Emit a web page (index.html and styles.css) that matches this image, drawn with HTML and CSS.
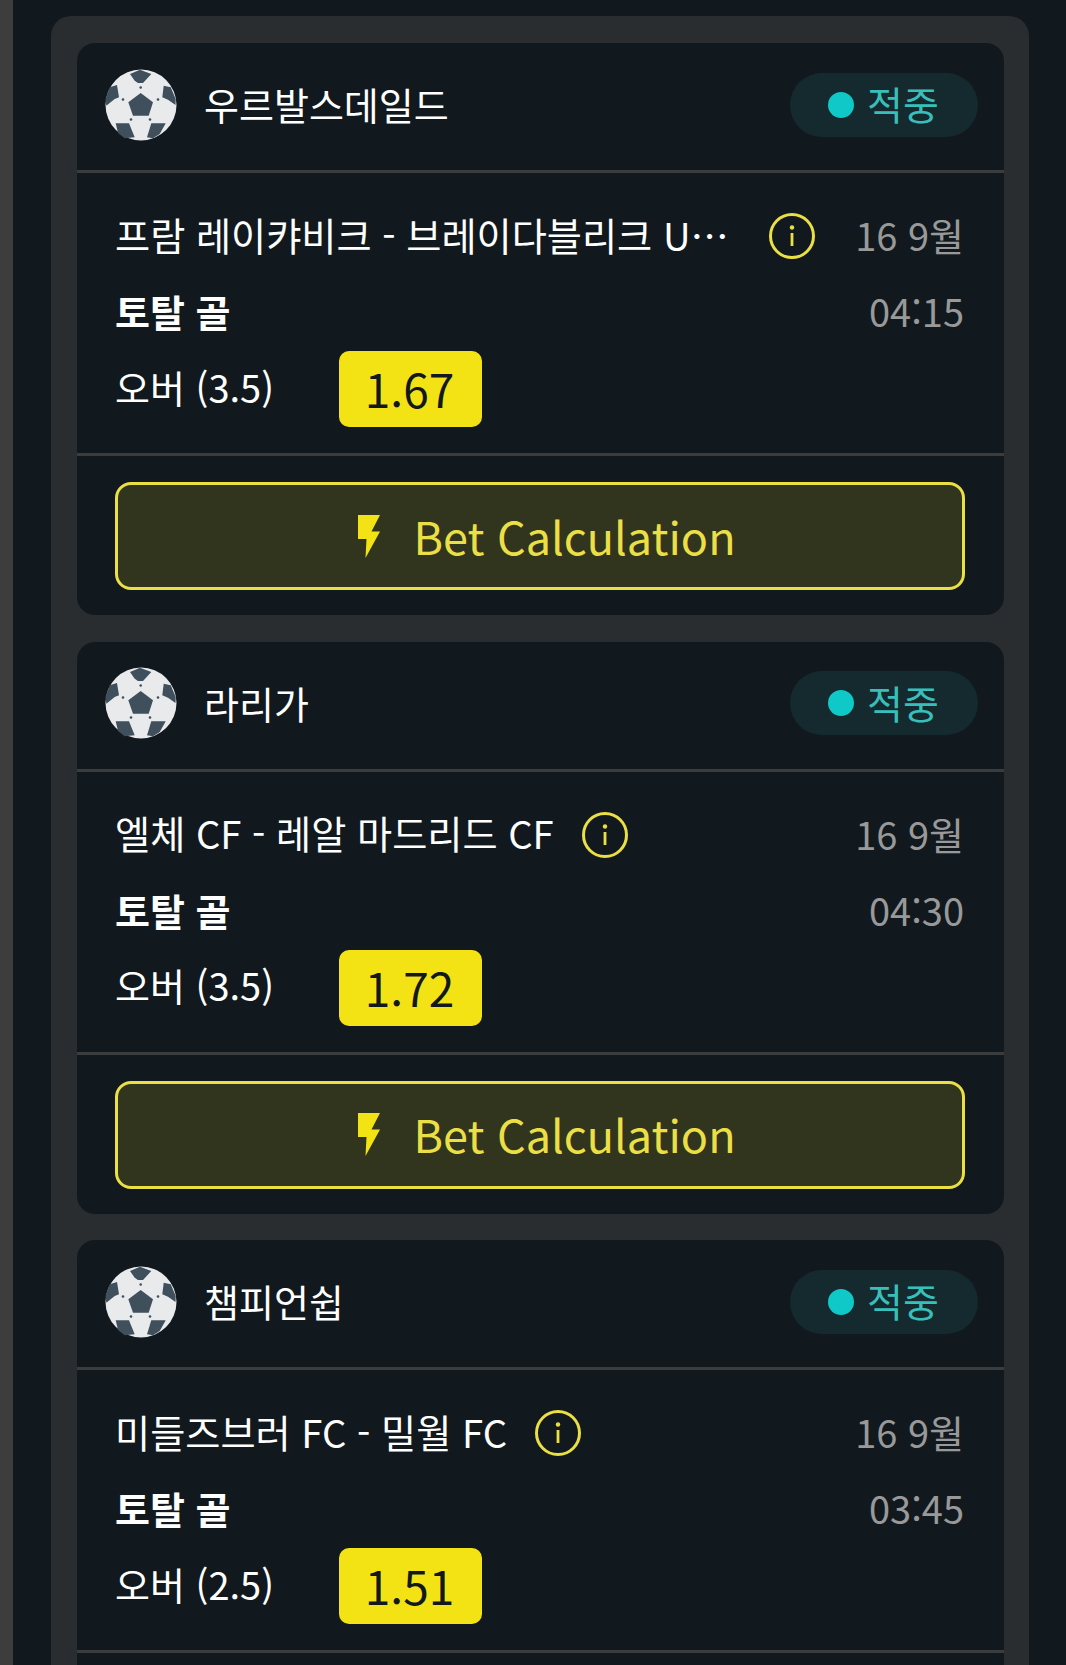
FILE: index.html
```html
<!DOCTYPE html>
<html lang="ko">
<head>
    <meta charset="UTF-8">
    <meta name="viewport" content="width=device-width, initial-scale=1.0">
    <title>Bet Slip</title>
    <link rel="stylesheet" href="styles.css">
</head>
<body>
<svg class="defs" width="0" height="0" aria-hidden="true">
    <symbol id="ball" viewBox="0 0 72 72">
        <circle cx="36" cy="36" r="35.5" fill="#e9eaec"/>
        <g fill="#3f4f5b">
            <polygon points="35.7,24 48,33.3 43.7,46.7 28,46.7 23.3,33.3"/>
            <polygon points="25,5 35,0.7 46.3,5 41,10.7 38,14 33,14 29.7,11.7"/>
            <polygon points="4.7,18.3 12,16 14,28.3 9.7,30 1.3,36.7 0.5,30"/>
            <polygon points="58.7,16.7 65.7,18.3 70.7,30 70.5,36 63,30.7 57.3,28.3"/>
            <polygon points="10.7,54.3 24,54.3 29.7,68.3 19.7,69.3 13,64"/>
            <polygon points="46.3,54.3 60.7,54.3 54.7,65 48,69.3 42,68.3"/>
            <circle cx="35.7" cy="18.5" r="1.3"/>
            <circle cx="18" cy="30.5" r="1.3"/>
            <circle cx="53" cy="30.5" r="1.3"/>
            <circle cx="26" cy="50.5" r="1.3"/>
            <circle cx="45" cy="50.5" r="1.3"/>
        </g>
    </symbol>
    <symbol id="info" viewBox="0 0 46 46">
        <circle cx="23" cy="23" r="21.5" fill="none" stroke="#eadf45" stroke-width="3"/>
        <circle cx="23" cy="14.5" r="2.2" fill="#eadf45"/>
        <rect x="21.6" y="20" width="2.8" height="13" fill="#eadf45"/>
    </symbol>
    <symbol id="bolt" viewBox="0 0 22 43">
        <path d="M0 0H22L13.5 16.5H22L7.5 43L8.5 24H0Z" fill="#f3e314"/>
    </symbol>
</svg>

<div class="page">
    <div class="panel">

        <div class="card">
            <div class="card-head">
                <svg class="ball"><use href="#ball"/></svg>
                <span class="league">우르발스데일드</span>
                <span class="status"><i class="dot"></i><span class="status-text">적중</span></span>
            </div>
            <div class="card-body">
                <div class="row">
                    <span class="match">프람 레이캬비크 - 브레이다블리크 U19 리그</span>
                    <svg class="info"><use href="#info"/></svg>
                    <span class="when">16 9월</span>
                </div>
                <div class="row">
                    <span class="market">토탈 골</span>
                    <span class="when">04:15</span>
                </div>
                <div class="pick">
                    <span class="pick-name">오버 (3.5)</span>
                    <span class="odds">1.67</span>
                </div>
            </div>
            <div class="card-foot">
                <button class="calc" type="button"><svg class="bolt"><use href="#bolt"/></svg><span class="calc-text">Bet Calculation</span></button>
            </div>
        </div>

        <div class="card">
            <div class="card-head">
                <svg class="ball"><use href="#ball"/></svg>
                <span class="league">라리가</span>
                <span class="status"><i class="dot"></i><span class="status-text">적중</span></span>
            </div>
            <div class="card-body">
                <div class="row">
                    <span class="match">엘체 CF - 레알 마드리드 CF</span>
                    <svg class="info"><use href="#info"/></svg>
                    <span class="when">16 9월</span>
                </div>
                <div class="row">
                    <span class="market">토탈 골</span>
                    <span class="when">04:30</span>
                </div>
                <div class="pick">
                    <span class="pick-name">오버 (3.5)</span>
                    <span class="odds">1.72</span>
                </div>
            </div>
            <div class="card-foot">
                <button class="calc" type="button"><svg class="bolt"><use href="#bolt"/></svg><span class="calc-text">Bet Calculation</span></button>
            </div>
        </div>

        <div class="card">
            <div class="card-head">
                <svg class="ball"><use href="#ball"/></svg>
                <span class="league">챔피언쉽</span>
                <span class="status"><i class="dot"></i><span class="status-text">적중</span></span>
            </div>
            <div class="card-body">
                <div class="row">
                    <span class="match">미들즈브러 FC - 밀월 FC</span>
                    <svg class="info"><use href="#info"/></svg>
                    <span class="when">16 9월</span>
                </div>
                <div class="row">
                    <span class="market">토탈 골</span>
                    <span class="when">03:45</span>
                </div>
                <div class="pick">
                    <span class="pick-name">오버 (2.5)</span>
                    <span class="odds">1.51</span>
                </div>
            </div>
            <!-- rest of this card is below the fold -->
            <div class="card-foot">
                <div class="calc"></div>
            </div>
        </div>

    </div>
</div>
</body>
</html>
```

FILE: styles.css
```css
html, body {
    height: 100%;
    margin: 0;
    overflow: hidden;
}
body {
    background: #12191e;
    color: #fff;
    font-family: "Noto Sans CJK KR", "Noto Sans", sans-serif;
}
.defs {
    position: absolute;
}
.page {
    border-left: 13px solid #3d3d3d;
    padding: 16px 37px 0 38px;
}
.panel {
    background: #292d30;
    border-radius: 20px;
    padding: 27px 25px 27px 26px;
    display: flex;
    flex-direction: column;
    gap: 26.5px;
}
.card {
    background: #12191e;
    border-radius: 18px;
}
.card-head {
    height: 127px;
    display: flex;
    align-items: center;
    gap: 27px;
    padding: 0 26px 0 28px;
    border-bottom: 3px solid #3a3c3e;
}
.ball {
    width: 72px;
    height: 72px;
    flex: none;
    margin-bottom: 4px;
}
.league {
    flex: 1;
    font-size: 38px;
    margin-bottom: 6px;
}
.status {
    width: 188px;
    height: 64px;
    margin-bottom: 4px;
    box-sizing: border-box;
    padding-left: 38px;
    display: flex;
    align-items: center;
    gap: 13px;
    background: #152a2e;
    border-radius: 32px;
    color: #38bfba;
    font-size: 39px;
}
.status-text {
    margin-bottom: 3px;
}
.dot {
    width: 26px;
    height: 26px;
    border-radius: 50%;
    background: #0fc8c8;
}
.card-body {
    padding: 25px 40px 26px 38px;
    border-bottom: 3px solid #3a3c3e;
}
.row {
    height: 76px;
    display: flex;
    align-items: center;
}
.match {
    font-size: 38.2px;
    max-width: 626px;
    white-space: nowrap;
    overflow: hidden;
    text-overflow: ellipsis;
    margin-bottom: 4px;
}
.info {
    width: 46px;
    height: 46px;
    flex: none;
    margin-left: 28px;
}
.when {
    margin-left: auto;
    margin-bottom: 3px;
    color: #999;
    font-size: 38px;
}
.market {
    font-size: 38px;
    font-weight: bold;
    margin-bottom: 3px;
}
.pick {
    display: flex;
    align-items: center;
    height: 76px;
    margin-top: 1px;
}
.pick-name {
    width: 224px;
    font-size: 38px;
    margin-bottom: 6px;
}
.odds {
    width: 143px;
    height: 76px;
    box-sizing: border-box;
    padding: 0 2px 2px 0;
    border-radius: 10px;
    background: #f3e314;
    color: #12191e;
    font-size: 46px;
    display: flex;
    align-items: center;
    justify-content: center;
}
.card-foot {
    padding: 26px 39px 25px 38px;
}
.calc {
    width: 100%;
    height: 108px;
    box-sizing: border-box;
    padding-left: 20px;
    display: flex;
    align-items: center;
    justify-content: center;
    gap: 33px;
    background: #32351e;
    border: 3px solid #eadf45;
    border-radius: 16px;
    color: #eadf45;
    font-family: inherit;
    font-size: 45px;
}
.calc-text {
    margin-bottom: 2px;
}
.bolt {
    width: 22px;
    height: 43px;
    flex: none;
}
```
